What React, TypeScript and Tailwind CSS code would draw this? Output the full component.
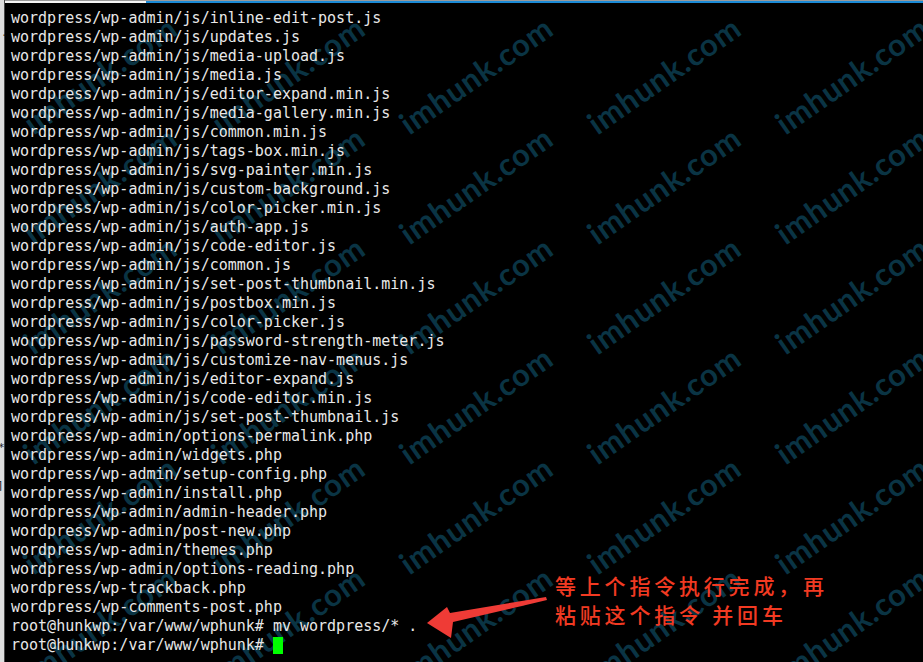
const lines = [
  "wordpress/wp-admin/js/inline-edit-post.js",
  "wordpress/wp-admin/js/updates.js",
  "wordpress/wp-admin/js/media-upload.js",
  "wordpress/wp-admin/js/media.js",
  "wordpress/wp-admin/js/editor-expand.min.js",
  "wordpress/wp-admin/js/media-gallery.min.js",
  "wordpress/wp-admin/js/common.min.js",
  "wordpress/wp-admin/js/tags-box.min.js",
  "wordpress/wp-admin/js/svg-painter.min.js",
  "wordpress/wp-admin/js/custom-background.js",
  "wordpress/wp-admin/js/color-picker.min.js",
  "wordpress/wp-admin/js/auth-app.js",
  "wordpress/wp-admin/js/code-editor.js",
  "wordpress/wp-admin/js/common.js",
  "wordpress/wp-admin/js/set-post-thumbnail.min.js",
  "wordpress/wp-admin/js/postbox.min.js",
  "wordpress/wp-admin/js/color-picker.js",
  "wordpress/wp-admin/js/password-strength-meter.js",
  "wordpress/wp-admin/js/customize-nav-menus.js",
  "wordpress/wp-admin/js/editor-expand.js",
  "wordpress/wp-admin/js/code-editor.min.js",
  "wordpress/wp-admin/js/set-post-thumbnail.js",
  "wordpress/wp-admin/options-permalink.php",
  "wordpress/wp-admin/widgets.php",
  "wordpress/wp-admin/setup-config.php",
  "wordpress/wp-admin/install.php",
  "wordpress/wp-admin/admin-header.php",
  "wordpress/wp-admin/post-new.php",
  "wordpress/wp-admin/themes.php",
  "wordpress/wp-admin/options-reading.php",
  "wordpress/wp-trackback.php",
  "wordpress/wp-comments-post.php",
  "root@hunkwp:/var/www/wphunk# mv wordpress/* .",
];

// watermark centres, one grid across the capture
const marks: { x: number; y: number }[] = [];
for (let r = 0; r < 6; r++) {
  for (let c = 0; c < 5; c++) {
    marks.push({ x: 95 + c * 188, y: 75 + r * 110 });
  }
}

function Watermarks() {
  return (
    <div className="pointer-events-none absolute inset-0 overflow-hidden">
      {marks.map((m, i) => (
        <span
          key={i}
          className="absolute -translate-x-1/2 -translate-y-1/2 -rotate-[35deg] whitespace-nowrap font-['Lato',sans-serif] text-[31px] font-bold leading-none tracking-[1px] text-[#0a3444]"
          style={{ left: m.x, top: m.y }}
        >
          imhunk.com
        </span>
      ))}
    </div>
  );
}

function Annotation() {
  return (
    <>
      <svg className="absolute left-0 top-0" width="923" height="662" viewBox="0 0 923 662">
        <polygon points="427,623 447,607 450,613 546,597 547,600 453,622 451,638" fill="#ef3b36" />
      </svg>
      <div className="absolute left-[555px] top-[571px] font-['Noto_Sans_CJK_SC',sans-serif] text-[21px] font-medium leading-[29px] tracking-[3.8px] text-[#f23a22]">
        <p>等上个指令执行完成，再</p>
        <p>粘贴这个指令 并回车</p>
      </div>
    </>
  );
}

export default function App() {
  return (
    <div className="relative flex h-[662px] w-[923px] overflow-hidden bg-black">
      <div className="relative w-[5px] shrink-0 border-r border-[#4a4a4a] bg-[#dedede] font-['DejaVu_Sans_Mono',monospace] text-[11px] leading-none text-[#222]">
        <span className="absolute left-[1px] top-[27px]">.</span>
        <span className="absolute left-[-2px] top-[442px]">*</span>
        <span className="absolute left-[-3px] top-[480px]">]</span>
      </div>
      <div className="relative flex flex-1 flex-col">
        <div className="flex h-[3px] shrink-0 border-t border-[#9a9a9a]">
          <div className="w-[141px] bg-[#f4f4f4]" />
          <div className="flex-1 bg-[#1b8ad6]" />
        </div>
        <Watermarks />
        <div className="relative pl-[6px] pt-[6px] font-['DejaVu_Sans_Mono',monospace] text-[15px] leading-[19px] text-[#e8e8e8]">
          {lines.map((l, i) => (
            <div key={i} className="whitespace-pre">
              {l}
            </div>
          ))}
          <div className="flex items-center whitespace-pre">
            root@hunkwp:/var/www/wphunk#{" "}
            <span className="inline-block h-[17px] w-[10px] bg-[#00ff00]" />
          </div>
        </div>
      </div>
      <Annotation />
    </div>
  );
}
